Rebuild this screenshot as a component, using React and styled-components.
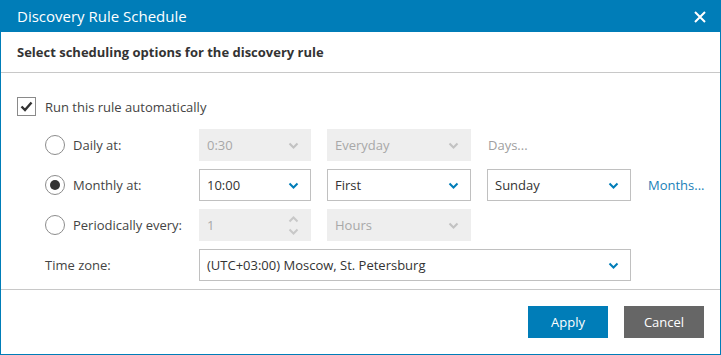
import React from "react";
import styled, { createGlobalStyle } from "styled-components";

const GlobalStyle = createGlobalStyle`
  html, body {
    margin: 0;
    padding: 0;
    background: #ffffff;
  }
  body {
    font-family: "Open Sans", "Liberation Sans", sans-serif;
  }
`;

const BLUE = "#007db8";

function Chevron({ up, color }) {
  return (
    <svg width="11" height="7" viewBox="0 0 11 7">
      <path
        d={up ? "M1.5 5.5 L5.5 1.5 L9.5 5.5" : "M1.5 1.5 L5.5 5.5 L9.5 1.5"}
        fill="none"
        stroke={color}
        strokeWidth="2"
      />
    </svg>
  );
}

function Select({ value, disabled, wide }) {
  return (
    <SelectBox $disabled={disabled} $wide={wide}>
      <span>{value}</span>
      <Chevron color={disabled ? "#c2c2c2" : BLUE} />
    </SelectBox>
  );
}

function Spinner({ value }) {
  return (
    <SelectBox $disabled>
      <span>{value}</span>
      <SpinArrows>
        <Chevron up color="#c8c8c8" />
        <Chevron color="#c8c8c8" />
      </SpinArrows>
    </SelectBox>
  );
}

function Radio({ checked, label }) {
  return (
    <OptionLabel>
      <RadioCircle>{checked && <RadioDot />}</RadioCircle>
      {label}
    </OptionLabel>
  );
}

export default function App() {
  return (
    <>
      <GlobalStyle />
      <Dialog>
        <TitleBar>
          <Title>Discovery Rule Schedule</Title>
          <CloseButton>
            <svg width="12" height="12" viewBox="0 0 12 12">
              <path d="M1 1 L11 11 M11 1 L1 11" stroke="#fff" strokeWidth="2" />
            </svg>
          </CloseButton>
        </TitleBar>
        <SubHeader>Select scheduling options for the discovery rule</SubHeader>
        <Body>
          <CheckRow>
            <CheckBox>
              <svg width="13" height="11" viewBox="0 0 13 11">
                <path d="M1.5 5.5 L5 9 L11.5 1.5" fill="none" stroke="#333" strokeWidth="2.4" />
              </svg>
            </CheckBox>
            Run this rule automatically
          </CheckRow>
          <OptionsGrid>
            <Radio label="Daily at:" />
            <Select value="0:30" disabled />
            <Select value="Everyday" disabled />
            <LinkText $muted>Days...</LinkText>
            <span />

            <Radio checked label="Monthly at:" />
            <Select value="10:00" />
            <Select value="First" />
            <Select value="Sunday" />
            <LinkText>Months...</LinkText>

            <Radio label="Periodically every:" />
            <Spinner value="1" />
            <Select value="Hours" disabled />
            <span />
            <span />

            <OptionLabel>Time zone:</OptionLabel>
            <Select value="(UTC+03:00) Moscow, St. Petersburg" wide />
          </OptionsGrid>
        </Body>
        <Footer>
          <Button $primary>Apply</Button>
          <Button>Cancel</Button>
        </Footer>
      </Dialog>
    </>
  );
}

const Dialog = styled.div`
  width: 721px;
  height: 355px;
  box-sizing: border-box;
  border: 1px solid ${BLUE};
  border-top: none;
  display: flex;
  flex-direction: column;
  background: #fff;
`;

const TitleBar = styled.div`
  height: 32px;
  margin: 0 -1px;
  background: ${BLUE};
  display: flex;
  align-items: center;
  justify-content: space-between;
  padding: 0 15px 0 17px;
`;

const Title = styled.div`
  color: #fff;
  font-size: 15px;
  line-height: 32px;
`;

const CloseButton = styled.div`
  display: flex;
  align-items: center;
  padding-top: 1px;
`;

const SubHeader = styled.div`
  height: 41px;
  box-sizing: border-box;
  border-bottom: 1px solid #c8c8c8;
  padding: 0 16px;
  display: flex;
  align-items: center;
  font-size: 13px;
  font-weight: 700;
  color: #333;
`;

const Body = styled.div`
  flex: 1;
  padding: 24px 16px 0;
`;

const CheckRow = styled.div`
  display: flex;
  align-items: center;
  gap: 9px;
  height: 19px;
  font-size: 13px;
  color: #444;
  margin-bottom: 13px;
`;

const CheckBox = styled.div`
  width: 19px;
  height: 19px;
  box-sizing: border-box;
  border: 1px solid #8a8a8a;
  display: flex;
  align-items: center;
  justify-content: center;
`;

const OptionsGrid = styled.div`
  margin-left: 28px;
  display: grid;
  grid-template-columns: 138px 112px 144px 144px auto;
  grid-auto-rows: 32px;
  column-gap: 16px;
  row-gap: 8px;
`;

const OptionLabel = styled.div`
  display: flex;
  align-items: center;
  gap: 8px;
  font-size: 13px;
  color: #444;
  white-space: nowrap;
`;

const RadioCircle = styled.div`
  width: 20px;
  height: 20px;
  box-sizing: border-box;
  border-radius: 50%;
  border: 1.5px solid #8c8c8c;
  display: flex;
  align-items: center;
  justify-content: center;
`;

const RadioDot = styled.div`
  width: 10px;
  height: 10px;
  border-radius: 50%;
  background: #333;
`;

const SelectBox = styled.div`
  box-sizing: border-box;
  height: 32px;
  display: flex;
  align-items: center;
  justify-content: space-between;
  padding: 0 11px 0 7px;
  font-size: 13px;
  color: ${(p) => (p.$disabled ? "#a8a8a8" : "#333")};
  background: ${(p) => (p.$disabled ? "#eeeeee" : "#fff")};
  border: 1px solid ${(p) => (p.$disabled ? "#eeeeee" : "#c0c0c0")};
  grid-column: ${(p) => (p.$wide ? "2 / 5" : "auto")};
`;

const SpinArrows = styled.div`
  display: flex;
  flex-direction: column;
  gap: 5px;
`;

const LinkText = styled.div`
  display: flex;
  align-items: center;
  font-size: 13px;
  margin-left: 1px;
  color: ${(p) => (p.$muted ? "#a0a0a0" : "#1a7fb8")};
`;

const Footer = styled.div`
  height: 65px;
  box-sizing: border-box;
  border-top: 1px solid #c8c8c8;
  display: flex;
  justify-content: flex-end;
  align-items: center;
  gap: 16px;
  padding: 0 16px;
`;

const Button = styled.div`
  width: 80px;
  height: 32px;
  display: flex;
  align-items: center;
  justify-content: center;
  font-size: 13px;
  color: #fff;
  background: ${(p) => (p.$primary ? BLUE : "#666666")};
`;
